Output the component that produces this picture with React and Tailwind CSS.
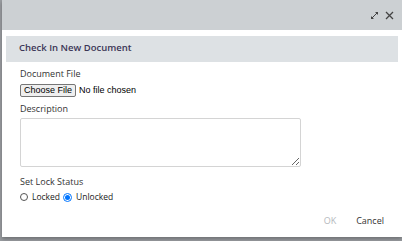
import React from "react";

export default function App() {
  return (
    <div className="w-[402px] h-[241px] bg-[#9a9da1] flex overflow-hidden" style={{ fontFamily: "'Open Sans', sans-serif" }}>
      <div className="ml-[2px] w-[400px] h-[237px] bg-white flex flex-col shadow-[0_2px_4px_rgba(0,0,0,0.3)]">
        <div className="h-[30px] bg-[#ccd0d3] flex items-center justify-end pr-[8px] gap-[6px] shrink-0">
          <svg width="9" height="9" viewBox="0 0 9 9" className="mt-[1px]">
            <path d="M5 1 H8 V4 Z" fill="#444" />
            <path d="M1 5 V8 H4 Z" fill="#444" />
            <path d="M7 2 L2 7" stroke="#444" strokeWidth="1" />
          </svg>
          <svg width="9" height="9" viewBox="0 0 9 9" className="mt-[1px]">
            <path d="M1 1 L8 8 M8 1 L1 8" stroke="#444" strokeWidth="1.3" />
          </svg>
        </div>
        <div className="px-[4px] pt-[6px]">
          <div className="h-[26px] bg-[#dde1e4] flex items-center pl-[13px] pb-[1px] text-[9.5px] font-semibold text-[#3b3656]">
            Check In New Document
          </div>
        </div>
        <div className="pl-[18px] pt-[6px] text-[9px] text-[#333]">
          <div className="leading-[12px]">Document File</div>
          <div className="flex items-center h-[13px] mt-[4px]" style={{ fontFamily: "'Liberation Sans', Arial, sans-serif" }}>
            <div className="h-[13px] px-[3px] border border-[#767676] rounded-[2px] bg-[#efefef] text-[9px] leading-[11px] text-black flex items-center">Choose File</div>
            <span className="ml-[3px] text-[9px] leading-[13px] text-black">No file chosen</span>
          </div>
          <div className="leading-[12px] mt-[6px]">Description</div>
          <textarea className="mt-[3px] block w-[281px] h-[49px] border border-[#d4d4d4] rounded-[2px] outline-none" />
          <div className="leading-[12px] mt-[9px]">Set Lock Status</div>
          <div className="flex items-center h-[12px] mt-[3px] text-[8.5px] leading-[12px] text-[#222]">
            <span className="w-[8px] h-[8px] rounded-full border border-[#555] bg-white" />
            <span className="ml-[4px]">Locked</span>
            <span className="ml-[3px] w-[9px] h-[9px] rounded-full border border-[#0075ff] bg-white flex items-center justify-center">
              <span className="w-[5px] h-[5px] rounded-full bg-[#0075ff]" />
            </span>
            <span className="ml-[4px]">Unlocked</span>
          </div>
        </div>
        <div className="flex justify-end items-center h-[12px] gap-[20px] pr-[18px] mt-[12px] text-[9px] leading-[12px]">
          <span className="text-[#b5b9bd]">OK</span>
          <span className="text-[#333]">Cancel</span>
        </div>
      </div>
    </div>
  );
}
